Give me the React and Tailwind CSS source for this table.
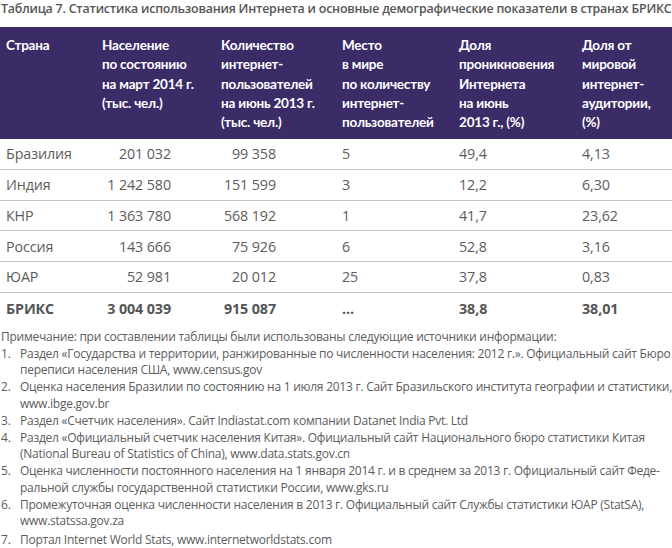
const HEAD = [
  ['Страна'],
  ['Население', 'по состоянию', 'на март 2014 г.', '(тыс. чел.)'],
  ['Количество', 'интернет-', 'пользователей', 'на июнь 2013 г.', '(тыс. чел.)'],
  ['Место', 'в мире', 'по количеству', 'интернет-', 'пользователей'],
  ['Доля', 'проникновения', 'Интернета', 'на июнь', '2013 г., (%)'],
  ['Доля от', 'мировой', 'интернет-', 'аудитории,', '(%)'],
]

const ROWS = [
  ['Бразилия', '201 032', '99 358', '5', '49,4', '4,13'],
  ['Индия', '1 242 580', '151 599', '3', '12,2', '6,30'],
  ['КНР', '1 363 780', '568 192', '1', '41,7', '23,62'],
  ['Россия', '143 666', '75 926', '6', '52,8', '3,16'],
  ['ЮАР', '52 981', '20 012', '25', '37,8', '0,83'],
]

const TOTAL = ['БРИКС', '3 004 039', '915 087', '...', '38,8', '38,01']

const NOTES = [
  ['Раздел «Государства и территории, ранжированные по численности населения: 2012 г.». Официальный сайт Бюро', 'переписи населения США, www.census.gov'],
  ['Оценка населения Бразилии по состоянию на 1 июля 2013 г. Сайт Бразильского института географии и статистики,', 'www.ibge.gov.br'],
  ['Раздел «Счетчик населения». Сайт Indiastat.com компании Datanet India Pvt. Ltd'],
  ['Раздел «Официальный счетчик населения Китая». Официальный сайт Национального бюро статистики Китая', '(National Bureau of Statistics of China), www.data.stats.gov.cn'],
  ['Оценка численности постоянного населения на 1 января 2014 г. и в среднем за 2013 г. Официальный сайт Феде-', 'ральной службы государственной статистики России, www.gks.ru'],
  ['Промежуточная оценка численности населения в 2013 г. Официальный сайт Службы статистики ЮАР (StatSA),', 'www.statssa.gov.za'],
  ['Портал Internet World Stats, www.internetworldstats.com'],
]

const GRID = 'grid grid-cols-[96px_119px_121px_117px_123px_96px]'

// numbers in cols 2–3 sit right-aligned, the rest hang off the left edge
const CELL = [
  'pl-[6px]',
  'text-right pr-[44px]',
  'text-right pr-[60px]',
  'pl-[6px]',
  'pl-[6px]',
  'pl-[6px]',
]

function Row({ cells, bold, last }) {
  return (
    <div
      className={`${GRID} h-[30.8px] items-center ${last ? '' : 'border-b border-[#c4c1cf]'} ${
        bold ? 'font-bold text-[#555]' : 'text-[#5c5c5c]'
      }`}
    >
      {cells.map((c, i) => (
        <div key={i} className={CELL[i]}>
          {c}
        </div>
      ))}
    </div>
  )
}

export default function App() {
  return (
    <div className="w-[672px] bg-white font-['Open_Sans',sans-serif]">
      <h1 className="h-[27px] whitespace-nowrap pl-[1px] text-[12.4px] font-semibold leading-[17px] tracking-[-0.2px] text-[#555]">
        Таблица 7. Статистика использования Интернета и основные демографические показатели в странах БРИКС
      </h1>

      <div className={`${GRID} h-[112px] bg-[#3b2c68] pt-[9px] font-['Lato',sans-serif] text-[13.5px] font-bold leading-[19.3px] tracking-[-0.2px] text-white`}>
        {HEAD.map((lines, i) => (
          <div key={i} className="pl-[6px]">
            {lines.map((t) => (
              <div key={t}>{t}</div>
            ))}
          </div>
        ))}
      </div>

      <div className="text-[14.3px] tracking-[-0.1px]">
        {ROWS.map((r) => (
          <Row key={r[0]} cells={r} />
        ))}
        <Row cells={TOTAL} bold last />
      </div>

      <div className="mt-[5px] pl-[1px] text-[12px] leading-[16.2px] tracking-[-0.25px] text-[#5c5c5c]">
        <p>Примечание: при составлении таблицы были использованы следующие источники информации:</p>
        <ol className="mt-[1px] space-y-[1px]">
          {NOTES.map((n, i) => (
            <li key={i} className={`flex ${i === 6 ? 'pt-[2px]' : ''}`}>
              <span className="w-[19px] shrink-0">{i + 1}.</span>
              <span className="whitespace-nowrap">
                {n.map((line) => (
                  <span key={line} className="block">
                    {line}
                  </span>
                ))}
              </span>
            </li>
          ))}
        </ol>
      </div>
    </div>
  )
}
